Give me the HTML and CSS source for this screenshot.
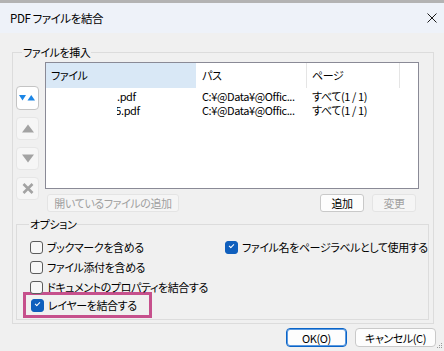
FILE: index.html
```html
<!DOCTYPE html>
<html lang="ja">
<head>
    <meta charset="UTF-8">
    <title>PDF ファイルを結合</title>
    <link rel="stylesheet" href="styles.css">
</head>
<body>
    <div class="dialog">
        <div class="topstrip"></div>
        <div class="titlebar">
            <span class="title">PDF ファイルを結合</span>
            <svg class="close" width="10" height="10" viewBox="0 0 10 10">
                <path d="M0.5 0.5 L9.5 9.5 M9.5 0.5 L0.5 9.5" stroke="#1a1a1a" stroke-width="1" fill="none"/>
            </svg>
        </div>

        <div class="group outer">
            <div class="group-title">ファイルを挿入</div>
            <div class="insert-row">
                <div class="sidebar">
                    <div class="side-btn active">
                        <svg width="17" height="6" viewBox="0 0 17 6">
                            <path d="M0 0 H7 L3.5 5.5 Z" fill="#1c86e6"/>
                            <path d="M8.5 5.5 H16 L12.25 0 Z" fill="#1c86e6"/>
                        </svg>
                    </div>
                    <div class="side-btn">
                        <svg width="12" height="9" viewBox="0 0 12 9">
                            <path d="M0 8.5 H12 L6 0.5 Z" fill="#a3a3a3"/>
                        </svg>
                    </div>
                    <div class="side-btn">
                        <svg width="12" height="9" viewBox="0 0 12 9">
                            <path d="M0 0.5 H12 L6 8.5 Z" fill="#a3a3a3"/>
                        </svg>
                    </div>
                    <div class="side-btn">
                        <svg width="12" height="11" viewBox="0 0 12 11">
                            <path d="M1.5 1 L10.5 10 M10.5 1 L1.5 10" stroke="#a3a3a3" stroke-width="2.6" fill="none"/>
                        </svg>
                    </div>
                </div>
                <div class="list-col">
                    <div class="listbox">
                        <div class="list-head">
                            <div class="col c1 sorted">ファイル</div>
                            <div class="col c2">パス</div>
                            <div class="col c3">ページ</div>
                            <div class="col c4"></div>
                        </div>
                        <div class="list-body">
                            <div class="list-row">
                                <div class="col c1 fname">.pdf</div>
                                <div class="col c2">C:¥@Data¥@Offic...</div>
                                <div class="col c3">すべて(1 / 1)</div>
                            </div>
                            <div class="list-row">
                                <div class="col c1 fname"><span class="cut">5</span>.pdf</div>
                                <div class="col c2">C:¥@Data¥@Offic...</div>
                                <div class="col c3">すべて(1 / 1)</div>
                            </div>
                        </div>
                    </div>
                    <div class="list-buttons">
                        <button class="btn disabled wide">開いているファイルの追加</button>
                        <span class="spacer"></span>
                        <button class="btn small">追加</button>
                        <button class="btn small disabled">変更</button>
                    </div>
                </div>
            </div>

            <div class="group options">
                <div class="group-title">オプション</div>
                <div class="opt-grid">
                    <label class="opt"><span class="box"></span>ブックマークを含める</label>
                    <label class="opt"><span class="box checked"></span>ファイル名をページラベルとして使用する</label>
                    <label class="opt"><span class="box"></span>ファイル添付を含める</label>
                    <span></span>
                    <label class="opt"><span class="box"></span>ドキュメントのプロパティを結合する</label>
                    <span></span>
                </div>
                <div class="highlight">
                    <label class="opt"><span class="box checked"></span>レイヤーを結合する</label>
                </div>
            </div>
        </div>

        <div class="footer">
            <button class="btn ok">OK(O)</button>
            <button class="btn cancel">キャンセル(C)</button>
            <svg class="grip" width="7" height="7" viewBox="0 0 7 7">
                <rect x="5" y="0" width="1" height="1" fill="#999"/>
                <rect x="3" y="2" width="1" height="1" fill="#999"/>
                <rect x="5" y="2" width="1" height="1" fill="#999"/>
                <rect x="1" y="4" width="1" height="1" fill="#999"/>
                <rect x="3" y="4" width="1" height="1" fill="#999"/>
                <rect x="5" y="4" width="1" height="1" fill="#999"/>
            </svg>
        </div>
    </div>
</body>
</html>
```

FILE: styles.css
```css
body {
    margin: 0;
    padding: 0;
    background-color: #f0f0f0;
    font-family: "Noto Sans CJK JP", "Noto Sans", sans-serif;
    font-size: 11px;
    letter-spacing: -0.4px;
    font-feature-settings: "palt";
    color: #000;
}
.dialog {
    width: 444px;
    height: 351px;
    overflow: hidden;
    position: relative;
}
.topstrip {
    height: 3px;
    background-color: #b3b3b3;
}
.titlebar {
    height: 30px;
    background-color: #eef2f9;
    display: flex;
    align-items: center;
    justify-content: space-between;
    padding: 0 7px 0 10px;
}
.title {
    font-size: 11.5px;
    line-height: 16px;
}

/* group boxes */
.group {
    border: 1px solid #dcdcdc;
}
.group-title {
    width: fit-content;
    line-height: 16px;
    margin: -9px 0 0 6px;
    padding: 0 1px;
    background-color: #f0f0f0;
}
.outer {
    margin: 19px 10px 0 12px;
    padding: 0 3px 3px 3px;
}
.insert-row {
    display: flex;
    margin-top: 2px;
    gap: 6px;
}
.sidebar {
    display: flex;
    flex-direction: column;
    gap: 7px;
    padding-top: 24px;
}
.side-btn {
    width: 21px;
    height: 21px;
    border: 1px solid #e6e6e6;
    border-radius: 4px;
    background-color: #f6f6f6;
    display: flex;
    align-items: center;
    justify-content: center;
}
.side-btn.active {
    background-color: #fff;
    border-color: #c4c4c4;
    height: 22px;
}
.list-col {
    width: 374px;
}
.listbox {
    height: 125px;
    border: 1px solid #8a8a96;
    background-color: #fff;
}
.list-head {
    display: flex;
    height: 25px;
}
.list-head .col {
    line-height: 25px;
    border-right: 1px solid #e5e5e5;
}
.list-head .sorted {
    background-color: #d9e8f6;
    border-right-color: #fff;
}
.col {
    padding-left: 5px;
    box-sizing: border-box;
    white-space: nowrap;
    overflow: hidden;
}
.c1 { width: 151px; }
.c2 { width: 110px; }
.c3 { width: 93px; }
.c4 { width: 18px; border-right: none !important; }
.list-body {
    padding-top: 1px;
}
.list-row {
    display: flex;
    line-height: 14px;
}
.fname {
    padding-left: 71px;
}
.cut {
    display: inline-block;
    width: 4px;
    overflow: hidden;
    direction: rtl;
    vertical-align: top;
}
.list-buttons {
    display: flex;
    gap: 8px;
    margin: 5px 3px 0 2px;
}
.spacer {
    flex: 1;
}
.btn {
    font-family: inherit;
    font-size: 11px;
    letter-spacing: -0.4px;
    font-feature-settings: "palt";
    white-space: nowrap;
    height: 18px;
    padding: 0;
    line-height: 16px;
    border: 1px solid #c9c9c9;
    border-radius: 3px;
    background-color: #fdfdfd;
    color: #000;
}
.btn.disabled {
    color: #a0a0a0;
    background-color: #f5f5f5;
    border-color: #e4e4e4;
}
.wide { width: 132px; }
.small { width: 44px; }

/* options */
.options {
    margin: 12px 1px 0 0;
    padding: 0 0 1px 6px;
}
.opt-grid {
    display: grid;
    grid-template-columns: 195px 1fr;
    margin-top: 5px;
}
.opt {
    display: flex;
    align-items: center;
    gap: 4px;
    height: 20px;
    padding-left: 7px;
    white-space: nowrap;
}
.box {
    width: 11px;
    height: 11px;
    border: 1px solid #5c5c5c;
    border-radius: 3px;
    background-color: #f7f7f7;
    position: relative;
}
.box.checked {
    background-color: #0f5fbd;
    border-color: #0f5fbd;
}
.box.checked::after {
    content: "";
    position: absolute;
    left: 3px;
    top: 2px;
    width: 4px;
    height: 2px;
    border-left: 1px solid #fff;
    border-bottom: 1px solid #fff;
    transform: rotate(-45deg);
}
.highlight {
    width: fit-content;
    margin: -5px 0 0 0;
    border: 3px solid #c6508c;
    padding-right: 12px;
}
.highlight .opt {
    padding-left: 5px;
}

/* footer */
.footer {
    display: flex;
    justify-content: flex-end;
    gap: 8px;
    margin: 4px 8px 0 0;
}
.ok {
    width: 61px;
    height: 19px;
    border-color: #0a64c8;
    box-shadow: inset 0 0 0 1px #5c9ae0;
    border-radius: 4px;
}
.cancel {
    width: 81px;
    height: 19px;
    border-radius: 4px;
}
.grip {
    position: absolute;
    right: 1px;
    bottom: 1px;
}
```
